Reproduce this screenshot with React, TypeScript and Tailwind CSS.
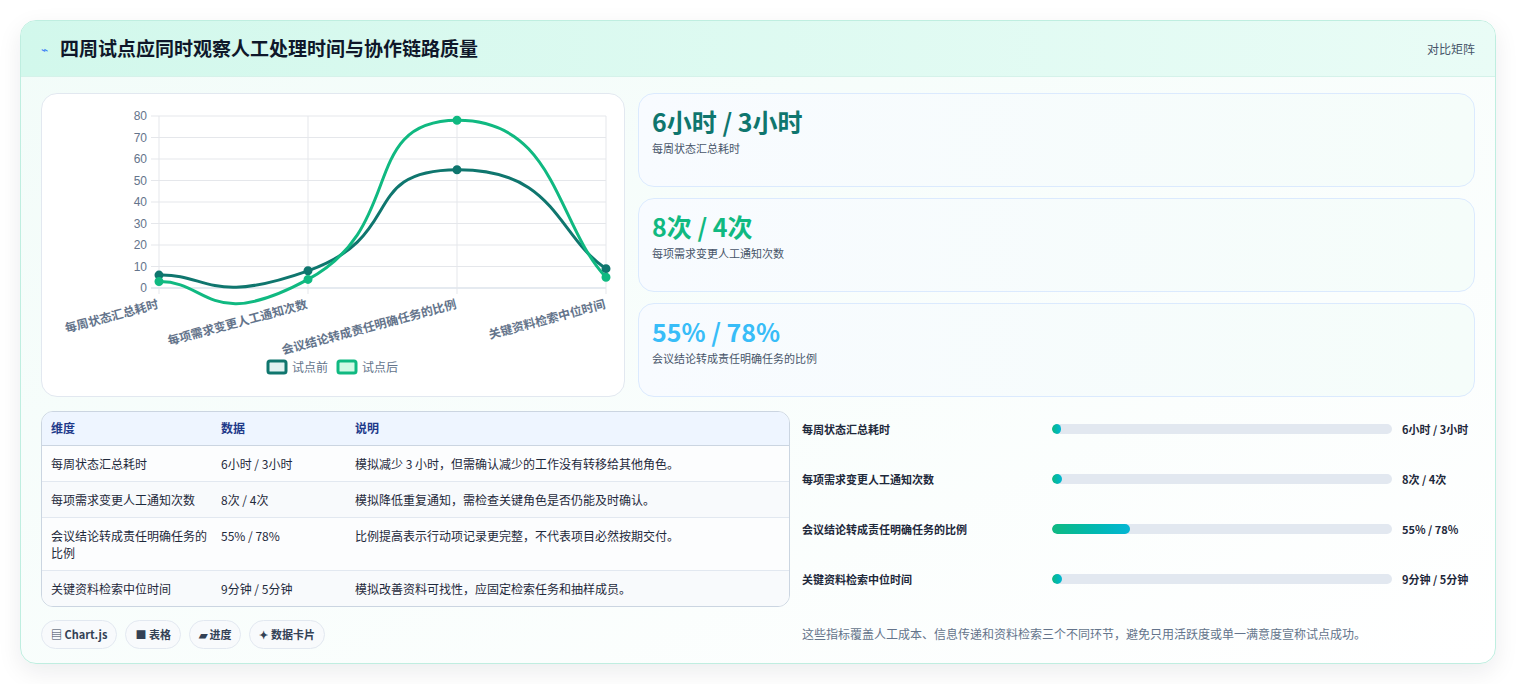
const FONT = { fontFamily: '"Noto Sans CJK SC", "Noto Sans", sans-serif' };

const labels = ["每周状态汇总耗时", "每项需求变更人工通知次数", "会议结论转成责任明确任务的比例", "关键资料检索中位时间"];
const before = [6, 8, 55, 9];
const after = [3, 4, 78, 5];

const X0 = 117, X1 = 564, Y0 = 194, YT = 22;
const px = (i: number) => X0 + ((X1 - X0) / 3) * i;
const py = (v: number) => Y0 - ((Y0 - YT) * v) / 80;

function curve(vals: number[]) {
  const p = vals.map((v, i) => [px(i), py(v)]);
  let d = `M${p[0][0]},${p[0][1]}`;
  const t = 0.4 / 1.2;
  for (let i = 0; i < p.length - 1; i++) {
    const a = p[i - 1] || p[i], b = p[i], c = p[i + 1], e = p[i + 2] || c;
    const c1 = [b[0] + (c[0] - a[0]) * t, b[1] + (c[1] - a[1]) * t];
    const c2 = [c[0] - (e[0] - b[0]) * t, c[1] - (e[1] - b[1]) * t];
    d += ` C${c1[0]},${c1[1]} ${c2[0]},${c2[1]} ${c[0]},${c[1]}`;
  }
  return d;
}

function Chart() {
  return (
    <svg width="583" height="302" viewBox="0 0 583 302">
      {[0, 10, 20, 30, 40, 50, 60, 70, 80].map((v) => (
        <g key={v}>
          <line x1={X0 - 8} x2={X1} y1={py(v)} y2={py(v)} stroke={v === 0 ? "#cbd5e1" : "#e5e7eb"} />
          <text x={X0 - 12} y={py(v) + 4} textAnchor="end" fontSize="12" fill="#64748b" fontFamily="Liberation Sans, sans-serif">{v}</text>
        </g>
      ))}
      {[0, 1, 2, 3].map((i) => (
        <g key={i}>
          <line x1={px(i)} x2={px(i)} y1={YT} y2={Y0 + 6} stroke="#e5e7eb" />
          <text x={px(i)} y={Y0 + 20} textAnchor="end" fontSize="12" fontWeight="600" fill="#64748b" transform={`rotate(-15 ${px(i)} ${Y0 + 20})`} style={FONT}>{labels[i]}</text>
        </g>
      ))}
      <path d={curve(before)} fill="none" stroke="#0f766e" strokeWidth="3" />
      <path d={curve(after)} fill="none" stroke="#10b981" strokeWidth="3" />
      {before.map((v, i) => <circle key={"b" + i} cx={px(i)} cy={py(v)} r="3.5" fill="#0f766e" stroke="#0f766e" strokeWidth="2" />)}
      {after.map((v, i) => <circle key={"a" + i} cx={px(i)} cy={py(v)} r="3.5" fill="#10b981" stroke="#10b981" strokeWidth="2" />)}
      <rect x="226" y="267" width="18" height="12" rx="2" fill="#e0f2f1" stroke="#0f766e" strokeWidth="3" />
      <text x="250" y="278" fontSize="12" fill="#64748b" style={FONT}>试点前</text>
      <rect x="296" y="267" width="18" height="12" rx="2" fill="#d1fae5" stroke="#10b981" strokeWidth="3" />
      <text x="320" y="278" fontSize="12" fill="#64748b" style={FONT}>试点后</text>
    </svg>
  );
}

const stats = [
  { v: "6小时 / 3小时", l: "每周状态汇总耗时", c: "text-[#0f766e]" },
  { v: "8次 / 4次", l: "每项需求变更人工通知次数", c: "text-[#10b981]" },
  { v: "55% / 78%", l: "会议结论转成责任明确任务的比例", c: "text-[#38bdf8]" },
];

const rows = [
  ["每周状态汇总耗时", "6小时 / 3小时", "模拟减少 3 小时，但需确认减少的工作没有转移给其他角色。"],
  ["每项需求变更人工通知次数", "8次 / 4次", "模拟降低重复通知，需检查关键角色是否仍能及时确认。"],
  ["会议结论转成责任明确任务的比例", "55% / 78%", "比例提高表示行动项记录更完整，不代表项目必然按期交付。"],
  ["关键资料检索中位时间", "9分钟 / 5分钟", "模拟改善资料可找性，应固定检索任务和抽样成员。"],
];

const bars = [
  { l: "每周状态汇总耗时", v: "6小时 / 3小时", w: 2.5 },
  { l: "每项需求变更人工通知次数", v: "8次 / 4次", w: 3 },
  { l: "会议结论转成责任明确任务的比例", v: "55% / 78%", w: 23 },
  { l: "关键资料检索中位时间", v: "9分钟 / 5分钟", w: 3 },
];

export default function App() {
  return (
    <div className="min-h-screen bg-white p-5" style={FONT}>
      <div className="w-[1476px] h-[644px] rounded-2xl border border-[#bfeee0] bg-gradient-to-br from-[#f2fcf9] to-white shadow-[0_8px_24px_rgba(15,23,42,0.08)] overflow-hidden flex flex-col">
        <div className="h-[56px] shrink-0 flex items-center justify-between px-5 bg-gradient-to-r from-[#d2f8ec] to-[#e9fcf6] border-b border-[#d5f2ea]">
          <div className="flex items-center gap-3">
            <span className="text-[#3b82f6] text-xs">⌁</span>
            <h1 className="text-[19px] font-bold text-[#0f172a]">四周试点应同时观察人工处理时间与协作链路质量</h1>
          </div>
          <span className="text-xs text-[#475569]">对比矩阵</span>
        </div>
        <div className="flex-1 px-5 pt-4 pb-4 flex flex-col">
          <div className="flex gap-[13px]">
            <div className="w-[584px] h-[304px] rounded-2xl border border-[#e2e8f0] bg-white overflow-hidden">
              <Chart />
            </div>
            <div className="flex-1 flex flex-col gap-[11px]">
              {stats.map((s) => (
                <div key={s.v} className="h-[94px] rounded-2xl border border-[#dbeafe] bg-gradient-to-r from-[#f8fbff] to-[#f5fdfa] px-[13px] pt-[10px]">
                  <div className={`text-[25px] font-bold leading-[34px] ${s.c}`}>{s.v}</div>
                  <div className="text-[11px] text-[#475569] mt-0.5">{s.l}</div>
                </div>
              ))}
            </div>
          </div>
          <div className="flex gap-3 mt-[14px]">
            <div className="w-[749px]">
              <div className="rounded-xl border border-[#cbd5e1] overflow-hidden bg-[#f8fafc]">
                <table className="w-full text-[12px] text-[#1e293b]">
                  <thead>
                    <tr className="bg-[#eef5ff] border-b border-[#cbd5e1] text-[#1e3a8a] text-left">
                      <th className="font-semibold h-[33px] pl-[9px] w-[179px]">维度</th>
                      <th className="font-semibold pl-0 w-[134px]">数据</th>
                      <th className="font-semibold">说明</th>
                    </tr>
                  </thead>
                  <tbody>
                    {rows.map((r, i) => (
                      <tr key={i} className={`border-t border-[#e2e8f0] align-top ${i % 2 ? "bg-[#f8fafc]" : "bg-white/60"}`}>
                        <td className="pl-[9px] pr-2 py-[9px] leading-[17px]">{r[0]}</td>
                        <td className="py-[9px] leading-[17px]">{r[1]}</td>
                        <td className="py-[9px] leading-[17px]">{r[2]}</td>
                      </tr>
                    ))}
                  </tbody>
                </table>
              </div>
              <div className="flex gap-2 mt-[13px]">
                {["▤ Chart.js", "■ 表格", "▰ 进度", "✦ 数据卡片"].map((c) => (
                  <span key={c} className="h-[29px] px-[9px] rounded-full border border-[#e2e8f0] bg-[#f8fafc] text-[11px] font-semibold text-[#334155] flex items-center">{c}</span>
                ))}
              </div>
            </div>
            <div className="flex-1 flex flex-col pt-[10px]">
              {bars.map((b) => (
                <div key={b.l} className="h-[50px] flex items-start gap-[10px] text-[11px] font-semibold text-[#1e293b]">
                  <span className="w-[240px] shrink-0">{b.l}</span>
                  <div className="flex-1 h-[10px] rounded-full bg-[#e2e8f0] mt-[3px] overflow-hidden">
                    <div className="h-full rounded-full bg-gradient-to-r from-[#10b981] to-[#06b6d4]" style={{ width: b.w + "%" }} />
                  </div>
                  <span className="w-[73px] shrink-0">{b.v}</span>
                </div>
              ))}
              <p className="text-[12px] text-[#64748b] mt-1">这些指标覆盖人工成本、信息传递和资料检索三个不同环节，避免只用活跃度或单一满意度宣称试点成功。</p>
            </div>
          </div>
        </div>
      </div>
    </div>
  );
}
